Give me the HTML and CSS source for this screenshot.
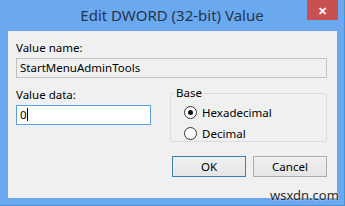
FILE: index.html
```html
<!DOCTYPE html>
<html>
<head>
<title>Edit DWORD (32-bit) Value</title>
<link rel="stylesheet" href="styles.css">
</head>
<body>
<div class="window">
  <div class="titlebar">
    <span class="title">Edit DWORD (32-bit) Value</span>
    <span class="close">&#x2715;</span>
  </div>
  <div class="client">
    <div class="label">Value name:</div>
    <div class="textbox readonly">StartMenuAdminTools</div>
    <div class="middle">
      <div class="data_col">
        <div class="label">Value data:</div>
        <div class="textbox focused">0<span class="caret"></span></div>
      </div>
      <fieldset class="base">
        <legend>Base</legend>
        <div class="radio_row"><span class="radio checked"></span>Hexadecimal</div>
        <div class="radio_row"><span class="radio"></span>Decimal</div>
      </fieldset>
    </div>
    <div class="buttons">
      <div class="button default">OK</div>
      <div class="button">Cancel</div>
    </div>
  </div>
  <div class="watermark">wsxdn.com</div>
</div>
</body>
</html>
```

FILE: styles.css
```css
body {
margin:0;
font-family:"Noto Sans", "Liberation Sans", sans-serif;
}

.window {
width:345px;
height:206px;
background:#6aa8ef;
position:relative;
box-sizing:border-box;
border-right:1px solid #4f8fd6;
border-bottom:1px solid #4f8fd6;
}

.titlebar {
height:31px;
position:relative;
display:flex;
justify-content:center;
align-items:center;
}

.title {
font-size:15px;
color:#24374b;
margin-top:-2px;
}

.close {
position:absolute;
top:0;
left:307px;
width:31px;
height:20px;
background:#c75050;
color:#fff;
font-size:11px;
font-weight:bold;
display:flex;
justify-content:center;
align-items:center;
}

.client {
margin:0 8px 0 8px;
width:329px;
height:167px;
background:#f0f0f0;
box-sizing:border-box;
padding:9px 10px 0 8px;
font-size:11.5px;
color:#000;
}

.label {
height:16px;
line-height:16px;
}

.textbox {
height:20px;
box-sizing:border-box;
border:1px solid #abadb3;
background:#fff;
line-height:18px;
padding-left:3px;
margin-top:2px;
}

.readonly {
background:#f0f0f0;
border-color:#c3c3c3;
}

.focused {
border-color:#5aa0e3;
}

.caret {
display:inline-block;
width:1px;
height:13px;
background:#000;
vertical-align:-2px;
}

.middle {
display:flex;
margin-top:9px;
}

.data_col {
width:139px;
}

.base {
margin:-1px 0 0 19px;
width:161px;
height:56px;
box-sizing:border-box;
border:1px solid #d8dde2;
border-radius:2px;
padding:0 0 0 13px;
}

.base legend {
padding:0 2px;
margin-left:-10px;
line-height:14px;
}

.radio_row {
height:21px;
display:flex;
align-items:center;
}

.radio_row:first-of-type {
margin-top:2px;
}

.radio {
width:11px;
height:11px;
border:1px solid #333;
border-radius:50%;
background:#fff;
margin-right:5px;
position:relative;
}

.checked:after {
content:"";
position:absolute;
left:3px;
top:3px;
width:5px;
height:5px;
border-radius:50%;
background:#111;
}

.buttons {
display:flex;
justify-content:flex-end;
gap:7px;
margin-top:14px;
}

.button {
width:74px;
height:21px;
box-sizing:border-box;
border:1px solid #acacac;
background:linear-gradient(#f0f0f0, #e5e5e5);
text-align:center;
line-height:19px;
}

.default {
border-color:#3c7fb1;
}

.watermark {
position:absolute;
left:270px;
top:186px;
font-size:13px;
color:#2a2a2a;
text-shadow:0 0 2px #fff;
}
```
